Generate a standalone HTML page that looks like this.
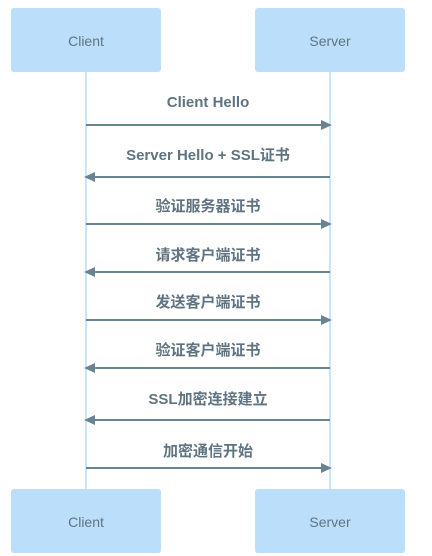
<!DOCTYPE html>
<html><head><meta charset="utf-8"><style>
body{margin:0;width:432px;height:556px;background:#fff;overflow:hidden}
svg{display:block}
.b{fill:#bbdefb}
.bt{font-family:"Liberation Sans","Noto Sans CJK SC",sans-serif;font-size:14px;fill:#5f7480}
.l{font-family:"Liberation Sans","Noto Sans CJK SC",sans-serif;font-size:15px;font-weight:bold;fill:#5f7480}
.a{stroke:#6b8494;stroke-width:2}
.h{fill:#6b8494}
</style></head><body>
<svg width="432" height="556" viewBox="0 0 432 556">
<line x1="86" y1="72" x2="86" y2="489" stroke="#b8dcf5" stroke-width="1.5"/>
<line x1="330" y1="72" x2="330" y2="489" stroke="#b8dcf5" stroke-width="1.5"/>
<rect class="b" x="11" y="8" width="150" height="64" rx="3"/>
<rect class="b" x="255" y="8" width="150" height="64" rx="3"/>
<rect class="b" x="11" y="489" width="150" height="64" rx="3"/>
<rect class="b" x="255" y="489" width="150" height="64" rx="3"/>
<text class="bt" x="86" y="46" text-anchor="middle">Client</text>
<text class="bt" x="330" y="46" text-anchor="middle">Server</text>
<text class="bt" x="86" y="527" text-anchor="middle">Client</text>
<text class="bt" x="330" y="527" text-anchor="middle">Server</text>
<g text-anchor="middle">
<text class="l" x="208" y="107">Client Hello</text>
<text class="l" x="208" y="160">Server Hello + SSL证书</text>
<text class="l" x="208" y="211">验证服务器证书</text>
<text class="l" x="208" y="260">请求客户端证书</text>
<text class="l" x="208" y="307">发送客户端证书</text>
<text class="l" x="208" y="355">验证客户端证书</text>
<text class="l" x="208" y="404">SSL加密连接建立</text>
<text class="l" x="208" y="456">加密通信开始</text>
</g>
<g>
<line class="a" x1="86" y1="125" x2="322" y2="125"/><path class="h" d="M332 125L321 120V130Z"/>
<line class="a" x1="94" y1="177" x2="330" y2="177"/><path class="h" d="M84 177L95 172V182Z"/>
<line class="a" x1="86" y1="224" x2="322" y2="224"/><path class="h" d="M332 224L321 219V229Z"/>
<line class="a" x1="94" y1="272" x2="330" y2="272"/><path class="h" d="M84 272L95 267V277Z"/>
<line class="a" x1="86" y1="320" x2="322" y2="320"/><path class="h" d="M332 320L321 315V325Z"/>
<line class="a" x1="94" y1="368" x2="330" y2="368"/><path class="h" d="M84 368L95 363V373Z"/>
<line class="a" x1="94" y1="420" x2="330" y2="420"/><path class="h" d="M84 420L95 415V425Z"/>
<line class="a" x1="86" y1="468" x2="322" y2="468"/><path class="h" d="M332 468L321 463V473Z"/>
</g>
</svg>
</body></html>
